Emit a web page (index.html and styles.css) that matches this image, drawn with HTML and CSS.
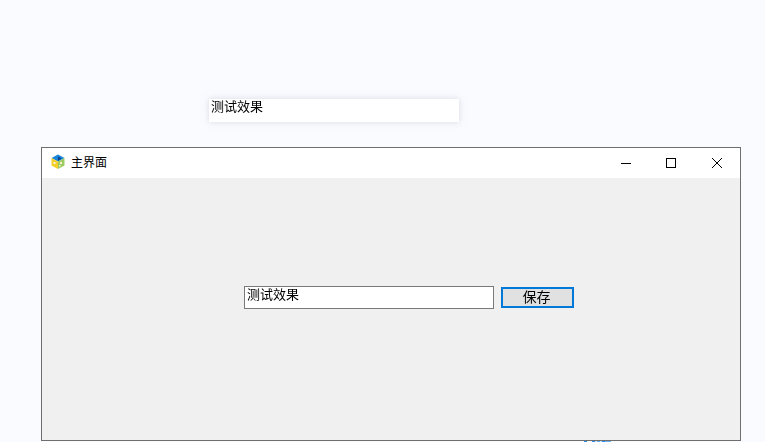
FILE: index.html
```html
<!DOCTYPE html>
<html lang="zh-CN">
<head>
<meta charset="utf-8">
<title>主界面</title>
<link rel="stylesheet" href="styles.css">
</head>
<body>
<div class="desktop">
  <div class="floating-field"><span class="crisp">测试效果</span></div>
  <div class="peek"></div>
  <section class="window">
    <header class="titlebar">
      <svg class="app-icon" width="16" height="16" viewBox="0 0 16 16">
        <path d="M8 .5 14.500 4 8 7.500 1.500 4Z" fill="#1a86d8"/>
        <path d="M8 2.500 11.500 4.500 8 7Z" fill="#123f8c"/>
        <path d="M1.500 4 8 7.500V15L1.500 11.500Z" fill="#f4cf2a"/>
        <path d="M14.500 4 8 7.500V15L14.500 11.500Z" fill="#9ccb62"/>
        <path d="M3.500 8h2v2h-2zM10 8h2v2h-2zM9 11h1.500v1.500H9z" fill="#f6f3d8"/>
      </svg>
      <span class="title">主界面</span>
      <div class="controls">
        <span class="control control-min">
          <svg width="12" height="12" viewBox="0 0 12 12"><path d="M1 6.500H11" stroke="#000" fill="none"/></svg>
        </span>
        <span class="control">
          <svg width="12" height="12" viewBox="0 0 12 12"><rect x="1.500" y="1.500" width="9" height="9" stroke="#000" fill="none"/></svg>
        </span>
        <span class="control">
          <svg width="12" height="12" viewBox="0 0 12 12"><path d="M1 1 11 11M11 1 1 11" stroke="#000" fill="none"/></svg>
        </span>
      </div>
    </header>
    <main class="client">
      <div class="form-row">
        <div class="text-field"><span class="crisp">测试效果</span></div>
        <button class="save" type="button"><span class="crisp">保存</span></button>
      </div>
    </main>
  </section>
</div>
</body>
</html>
```
FILE: styles.css
```css
html, body {
  margin: 0;
  padding: 0;
  width: 765px;
  height: 442px;
  overflow: hidden;
  background: #fafbff;
}

body, button {
  font-family: "Noto Sans CJK SC", "Liberation Sans", sans-serif;
  color: #000;
}

.desktop {
  position: relative;
  width: 765px;
  height: 442px;
  overflow: hidden;
}

.crisp {
  display: block;
  will-change: opacity;
}

.floating-field {
  position: absolute;
  left: 209px;
  top: 99px;
  box-sizing: border-box;
  width: 250px;
  height: 23px;
  padding: 0 2px;
  background: #fff;
  box-shadow: 0 0 6px rgba(180, 185, 195, 0.5);
  font-size: 13px;
  line-height: 13px;
}

.peek {
  position: absolute;
  left: 584px;
  top: 441px;
  width: 27px;
  height: 1px;
  background: linear-gradient(90deg, #2b8cf0 0 3px, #fafbff 3px 8px, #2b8cf0 8px 11px, #cfe4fa 11px 13px, #6db0f2 13px 16px, #cfe4fa 16px 18px, #2b8cf0 18px 21px, #6db0f2 21px 27px);
}

.window {
  position: absolute;
  left: 41px;
  top: 147px;
  box-sizing: border-box;
  width: 700px;
  height: 294px;
  display: flex;
  flex-direction: column;
  border: 1px solid #6e6e6e;
  background: #f0f0f0;
}

.titlebar {
  flex: none;
  height: 30px;
  display: flex;
  align-items: center;
  padding-left: 8px;
  background: #fff;
}

.app-icon {
  flex: none;
  margin-right: 5px;
  margin-bottom: 2px;
}

.title {
  font-size: 12px;
  line-height: 16px;
  margin-bottom: 2px;
}

.controls {
  margin-left: auto;
  display: flex;
}

.control {
  width: 46px;
  height: 24px;
  display: flex;
  align-items: center;
  justify-content: center;
}

.control-min {
  width: 44px;
}

.client {
  flex: 1;
  display: flex;
  flex-direction: column;
  padding: 108px 0 0 202px;
  background: #f0f0f0;
}

.form-row {
  display: flex;
  align-items: flex-start;
  gap: 7px;
}

.text-field {
  box-sizing: border-box;
  width: 250px;
  height: 23px;
  padding: 0 2px;
  border: 1px solid #7a7a7a;
  background: #fff;
  font-size: 13px;
  line-height: 13px;
}

.save {
  box-sizing: border-box;
  width: 73px;
  height: 21px;
  margin: 1px 0 0;
  padding: 0 2px 2px 0;
  border: 2px solid #0078d7;
  border-radius: 0;
  background: #e1e1e1;
  font-size: 14px;
  line-height: 15px;
}
```
